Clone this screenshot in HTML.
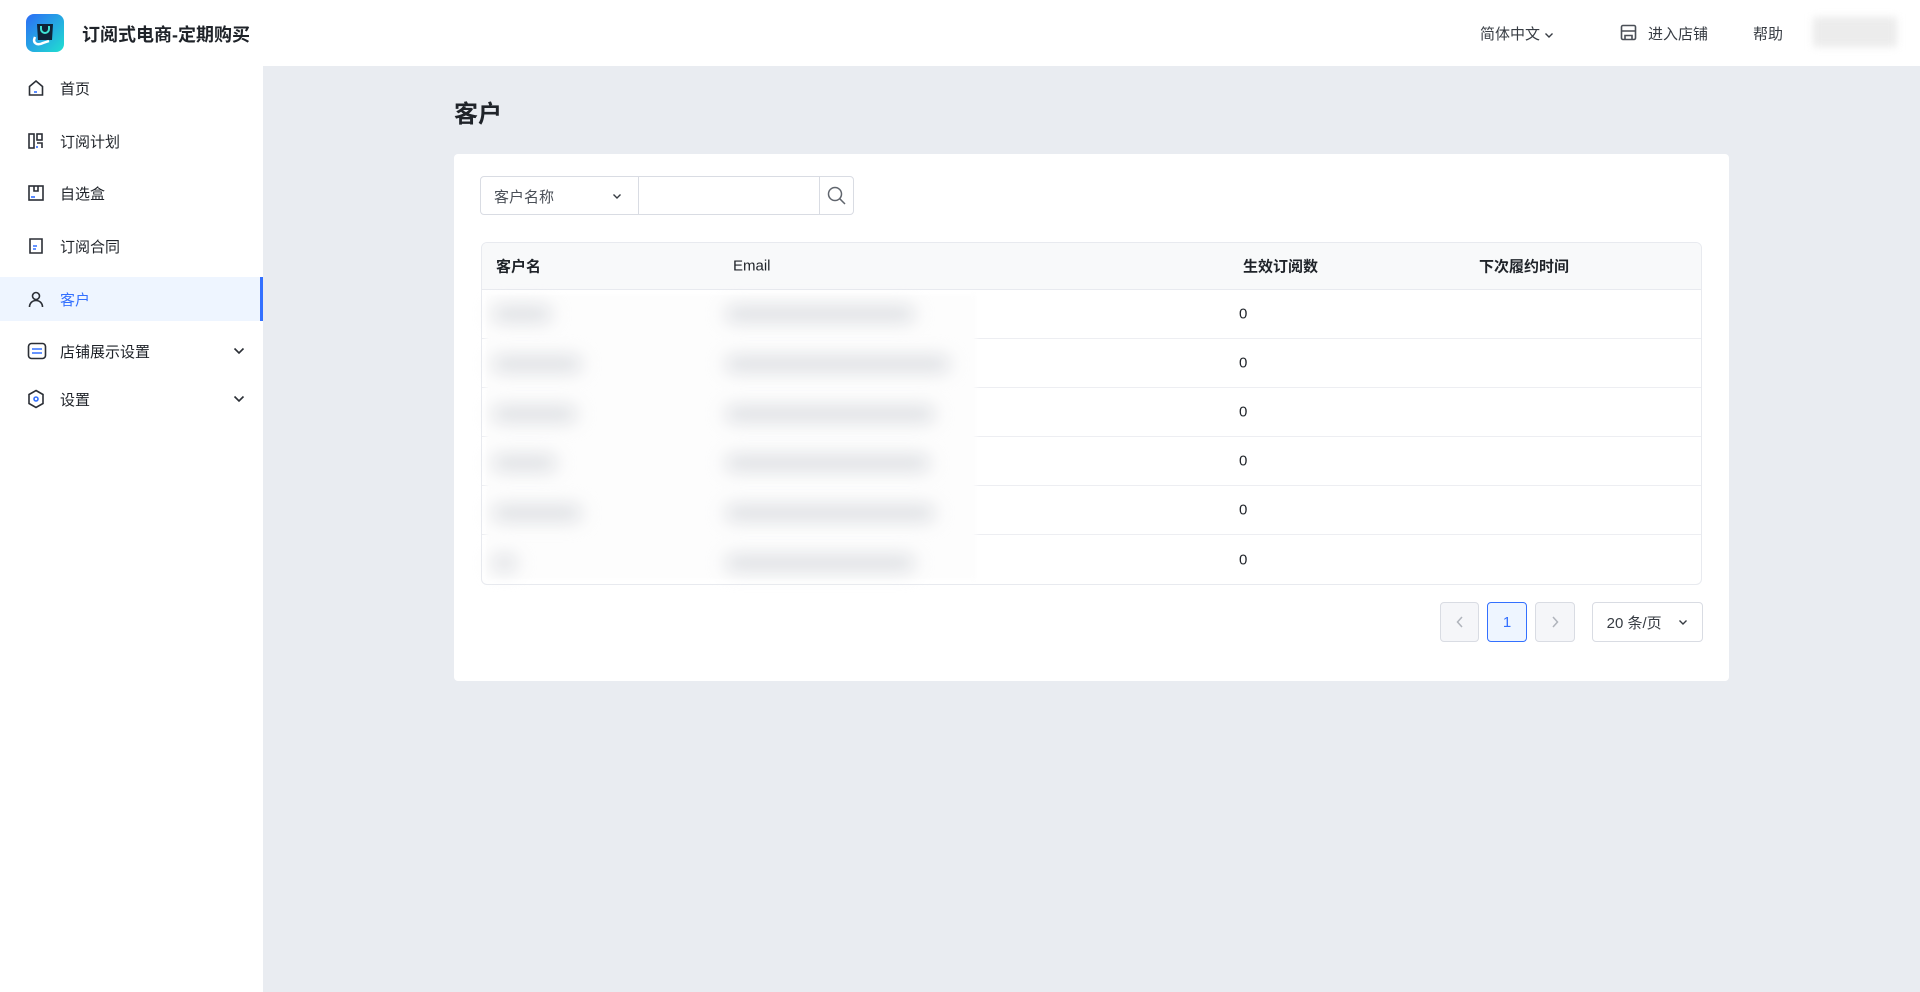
<!DOCTYPE html>
<html><head><meta charset="utf-8"><style>
*{box-sizing:border-box;margin:0;padding:0}
body{width:1920px;height:992px;overflow:hidden;background:#e9ecf1;font-family:"Liberation Sans","Noto Sans CJK SC",sans-serif;color:#1f2329;position:relative}
.hdr{position:absolute;left:0;top:0;width:1920px;height:66px;background:#fff}
.side{position:absolute;left:0;top:66px;width:263px;height:926px;background:#fff}
.mi{position:absolute;left:0;width:263px;height:44px;display:flex;align-items:center;font-size:15px;color:#1f2329}
.mi svg{position:absolute;left:27px}
.mi span{position:absolute;left:60px}
.mi.act{background:#eef5ff;color:#3370ff;border-right:3px solid #3370ff}
.mi svg.chev{left:233px}
.card{position:absolute;left:454px;top:154px;width:1275px;height:527px;background:#fff;border-radius:4px}
.blur{position:absolute;background:#dcdee2;filter:blur(9px);height:16px;border-radius:8px}
.tbl{position:absolute;left:481px;top:242px;width:1221px;height:343px;border:1px solid #e8eaef;border-radius:6px;overflow:hidden}
.th{position:absolute;left:0;top:0;width:100%;height:47px;background:#f8f9fa;border-bottom:1px solid #e8eaef;font-size:15px;font-weight:bold}
.th div,.row div{position:absolute;top:50%;transform:translateY(-50%)}
.row{position:absolute;left:0;width:100%;height:49px;border-bottom:1px solid #edeef2;font-size:15px}
.pb{position:absolute;top:602px;height:40px;border:1px solid #d9dce3;border-radius:4px;background:#f5f6f9;display:flex;align-items:center;justify-content:center;font-size:15px}
.dd{display:inline-block;vertical-align:middle}
</style></head><body>
<div class="hdr">
 <svg style="position:absolute;left:26px;top:14px" width="38" height="38" viewBox="0 0 38 38"><defs><linearGradient id="g" x1="0" y1="0" x2="1" y2="1"><stop offset="0" stop-color="#2c6cf6"/><stop offset="1" stop-color="#1fe0d0"/></linearGradient></defs><rect width="38" height="38" rx="8" fill="url(#g)"/><path d="M11 10h16l-1 16h-14z" fill="#0f2338"/><path d="M15 12v3a4 4 0 0 0 8 0v-3" stroke="#3fe3d6" stroke-width="2" fill="none"/><path d="M9 23c-3 6 2 9 8 6l6-2" stroke="#fff" stroke-width="2.5" fill="none"/></svg>
 <div style="position:absolute;left:82px;top:21px;font-size:18px;font-weight:bold">订阅式电商-定期购买</div>
 <div style="position:absolute;left:1480px;top:23px;font-size:15px;color:#373c43">简体中文 <svg class="dd" width="10" height="7" viewBox="0 0 10 7" fill="none" stroke="#373c43" stroke-width="1.4"><path d="M1.5 1.5L5 5l3.5-3.5"/></svg></div>
 <svg style="position:absolute;left:1620px;top:24px" width="17" height="17" viewBox="0 0 17 17" fill="none" stroke="#4a4f57" stroke-width="1.6"><rect x="1.5" y="1.5" width="14" height="14" rx="1.5"/><path d="M1.5 7h14M5 15.5v-4h7v4"/></svg>
 <div style="position:absolute;left:1648px;top:23px;font-size:15px;color:#373c43">进入店铺</div>
 <div style="position:absolute;left:1753px;top:23px;font-size:15px;color:#373c43">帮助</div>
 <div style="position:absolute;left:1813px;top:17px;width:84px;height:30px;background:#ececec;filter:blur(4px)"></div>
</div>
<div class="side">
 <div class="mi" style="top:0"><svg width="18" height="18" viewBox="0 0 18 18" fill="none" stroke="#2b2f36" stroke-width="1.6"><path d="M2.5 7.5L9 2l6.5 5.5V16h-13z"/><path d="M7 13h3" stroke="#3370ff"/></svg><span>首页</span></div>
 <div class="mi" style="top:53px"><svg width="18" height="18" viewBox="0 0 18 18" fill="none" stroke="#2b2f36" stroke-width="1.6"><rect x="2" y="2" width="5" height="14"/><rect x="10" y="2" width="5" height="6"/><path d="M10 11h5v5" /><path d="M10 16v-2" stroke="#3370ff"/></svg><span>订阅计划</span></div>
 <div class="mi" style="top:105px"><svg width="18" height="18" viewBox="0 0 18 18" fill="none" stroke="#2b2f36" stroke-width="1.6"><rect x="2" y="2" width="14" height="14"/><path d="M7 2v5h4V2"/><path d="M4 13h4" stroke="#3370ff"/></svg><span>自选盒</span></div>
 <div class="mi" style="top:158px"><svg width="18" height="18" viewBox="0 0 18 18" fill="none" stroke="#2b2f36" stroke-width="1.6"><path d="M3 2h12v14H3z"/><path d="M6 9h4M6 12h3" stroke="#3370ff"/></svg><span>订阅合同</span></div>
 <div class="mi act" style="top:211px"><svg width="18" height="18" viewBox="0 0 18 18" fill="none" stroke="#2b2f36" stroke-width="1.6"><circle cx="9" cy="6" r="3.5"/><path d="M2.5 17c0-4 3-6.5 6.5-6.5s6.5 2.5 6.5 6.5"/></svg><span>客户</span></div>
 <div class="mi" style="top:263px"><svg width="20" height="18" viewBox="0 0 20 18" fill="none" stroke="#2b2f36" stroke-width="1.6"><rect x="1.5" y="1.5" width="17" height="15" rx="3"/><path d="M5 7h10M5 11h10" stroke="#3370ff"/></svg><span>店铺展示设置</span><svg class="chev" width="12" height="8" viewBox="0 0 12 8" fill="none" stroke="#2b2f36" stroke-width="1.6"><path d="M1.5 1.5L6 6l4.5-4.5"/></svg></div>
 <div class="mi" style="top:311px"><svg width="18" height="20" viewBox="0 0 18 20" fill="none" stroke="#2b2f36" stroke-width="1.6"><path d="M9 1.5l7 4v9l-7 4-7-4v-9z"/><circle cx="9" cy="10" r="2" stroke="#3370ff"/></svg><span>设置</span><svg class="chev" width="12" height="8" viewBox="0 0 12 8" fill="none" stroke="#2b2f36" stroke-width="1.6"><path d="M1.5 1.5L6 6l4.5-4.5"/></svg></div>
</div>
<div style="position:absolute;left:454px;top:94px;font-size:24px;font-weight:bold">客户</div>
<div class="card"></div>
<div style="position:absolute;left:480px;top:176px;width:159px;height:39px;border:1px solid #d9dce3;border-radius:4px 0 0 4px;font-size:15px;color:#4a4f57;padding:9px 0 0 13px">客户名称<svg style="position:absolute;left:131px;top:16px" width="10" height="7" viewBox="0 0 10 7" fill="none" stroke="#373c43" stroke-width="1.4"><path d="M1.5 1.5L5 5l3.5-3.5"/></svg></div>
<div style="position:absolute;left:638px;top:176px;width:182px;height:39px;border:1px solid #d9dce3"></div>
<div style="position:absolute;left:819px;top:176px;width:35px;height:39px;border:1px solid #d9dce3;border-radius:0 4px 4px 0"><svg style="position:absolute;left:7px;top:9px" width="20" height="20" viewBox="0 0 20 20" fill="none" stroke="#60656d" stroke-width="1.5"><circle cx="8" cy="8" r="6.5"/><path d="M12.7 12.7L18 18"/></svg></div>
<div class="tbl">
 <div class="th"><div style="left:14px">客户名</div><div style="left:251px;font-weight:normal">Email</div><div style="left:761px">生效订阅数</div><div style="left:997px">下次履约时间</div></div>
 <div class="row" style="top:47px"><div style="left:757px">0</div></div>
 <div class="row" style="top:96px"><div style="left:757px">0</div></div>
 <div class="row" style="top:145px"><div style="left:757px">0</div></div>
 <div class="row" style="top:194px"><div style="left:757px">0</div></div>
 <div class="row" style="top:243px"><div style="left:757px">0</div></div>
 <div class="row" style="top:292px;border-bottom:none"><div style="left:757px">0</div></div>
</div>
<div style="position:absolute;left:486px;top:295px;width:490px;height:284px;background:#fdfdfd;filter:blur(2px)"></div>
<div class="blur" style="left:492px;top:306px;width:60px"></div><div class="blur" style="left:725px;top:306px;width:190px"></div>
<div class="blur" style="left:492px;top:356px;width:90px"></div><div class="blur" style="left:725px;top:356px;width:225px"></div>
<div class="blur" style="left:492px;top:406px;width:85px"></div><div class="blur" style="left:725px;top:406px;width:210px"></div>
<div class="blur" style="left:492px;top:455px;width:65px"></div><div class="blur" style="left:725px;top:455px;width:205px"></div>
<div class="blur" style="left:492px;top:505px;width:90px"></div><div class="blur" style="left:725px;top:505px;width:210px"></div>
<div class="blur" style="left:492px;top:555px;width:25px"></div><div class="blur" style="left:725px;top:555px;width:190px"></div>
<div class="pb" style="left:1440px;width:39px"><svg width="8" height="12" viewBox="0 0 8 12" fill="none" stroke="#b0b4bc" stroke-width="1.5"><path d="M6 1L1.5 6 6 11"/></svg></div>
<div class="pb" style="left:1487px;width:40px;border-color:#3370ff;background:#eef5ff;color:#3370ff">1</div>
<div class="pb" style="left:1535px;width:40px"><svg width="8" height="12" viewBox="0 0 8 12" fill="none" stroke="#b0b4bc" stroke-width="1.5"><path d="M2 1l4.5 5L2 11"/></svg></div>
<div class="pb" style="left:1592px;width:111px;background:#fff;color:#373c43">20 条/页&nbsp;&nbsp;&nbsp;&nbsp;<svg width="10" height="7" viewBox="0 0 10 7" fill="none" stroke="#373c43" stroke-width="1.4"><path d="M1.5 1.5L5 5l3.5-3.5"/></svg></div>
</body></html>
